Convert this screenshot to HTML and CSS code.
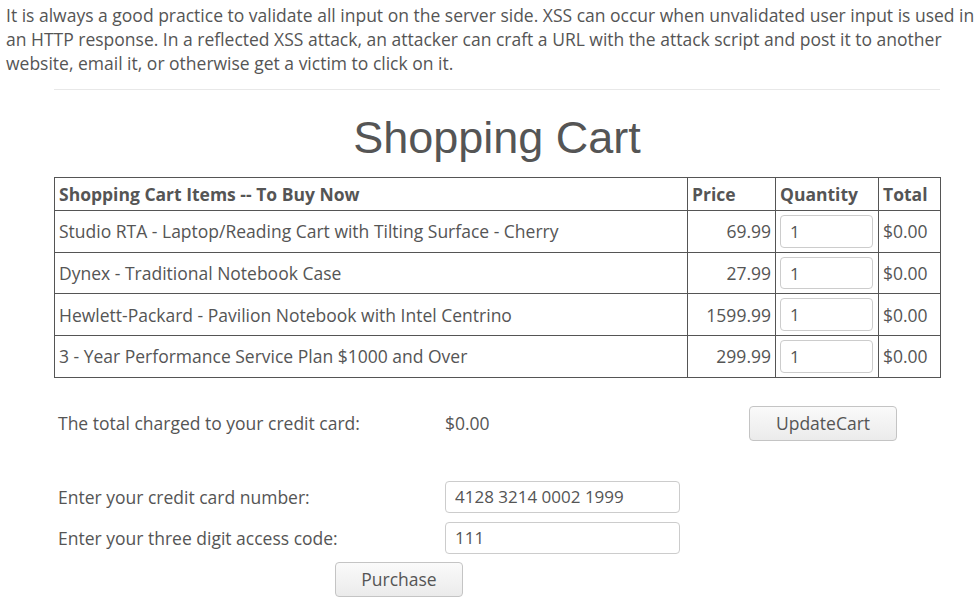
FILE: index.html
```html
<!DOCTYPE html>
<html>
<head>
<meta charset="utf-8">
<link rel="stylesheet" href="styles.css">
</head>
<body>
<p class="intro">It is always a good practice to validate all input on the server side. XSS can occur when unvalidated user input is used in an HTTP response. In a reflected XSS attack, an attacker can craft a URL with the attack script and post it to another website, email it, or otherwise get a victim to click on it.</p>
<div class="lesson">
  <hr class="rule">
  <h1 class="title">Shopping Cart</h1>
  <table class="cart">
    <colgroup>
      <col class="c-item"><col class="c-price"><col class="c-qty"><col class="c-total">
    </colgroup>
    <thead>
      <tr><th>Shopping Cart Items -- To Buy Now</th><th>Price</th><th>Quantity</th><th>Total</th></tr>
    </thead>
    <tbody>
      <tr><td>Studio RTA - Laptop/Reading Cart with Tilting Surface - Cherry</td><td class="num">69.99</td><td><input class="field qty" value="1"></td><td>$0.00</td></tr>
      <tr><td>Dynex - Traditional Notebook Case</td><td class="num">27.99</td><td><input class="field qty" value="1"></td><td>$0.00</td></tr>
      <tr><td>Hewlett-Packard - Pavilion Notebook with Intel Centrino</td><td class="num">1599.99</td><td><input class="field qty" value="1"></td><td>$0.00</td></tr>
      <tr><td>3 - Year Performance Service Plan $1000 and Over</td><td class="num">299.99</td><td><input class="field qty" value="1"></td><td>$0.00</td></tr>
    </tbody>
  </table>
  <div class="checkout">
    <div class="row total-row">
      <span class="label">The total charged to your credit card:</span>
      <span class="value">$0.00</span>
      <button class="btn update">UpdateCart</button>
    </div>
    <div class="row card-row">
      <span class="label">Enter your credit card number:</span>
      <input class="field wide" value="4128 3214 0002 1999">
    </div>
    <div class="row code-row">
      <span class="label">Enter your three digit access code:</span>
      <input class="field wide" value="111">
    </div>
    <div class="row buy-row">
      <button class="btn purchase">Purchase</button>
    </div>
  </div>
</div>
</body>
</html>
```
FILE: styles.css
```css
html, body {
  margin: 0;
  padding: 0;
  background: #fff;
}
body {
  font-family: "Open Sans", "DejaVu Sans", sans-serif;
  font-size: 17.5px;
  line-height: 24px;
  color: #555;
}
.intro {
  margin: 0;
  padding: 3px 0 0 6px;
  width: 972px;
}
.lesson {
  margin: 0 38px 0 54px;
  width: 886px;
}
.rule {
  margin: 14px 0 0 0;
  border: 0;
  border-top: 1px solid #e8e8e8;
  height: 0;
}
.title {
  margin: 22px 0 13px 0;
  font-family: "Liberation Sans", Arial, sans-serif;
  font-weight: normal;
  font-size: 45px;
  line-height: 52px;
  text-align: center;
  color: #555;
}
.cart {
  width: 886px;
  border-collapse: collapse;
  table-layout: fixed;
  border: 1px solid #555;
}
.c-item { width: 633px; }
.c-price { width: 88px; }
.c-qty { width: 103px; }
.c-total { width: 62px; }
.cart th, .cart td {
  border: 1px solid #555;
  padding: 4px;
  text-align: left;
  vertical-align: middle;
  white-space: nowrap;
}
.cart th {
  font-weight: bold;
}
.cart td.num {
  text-align: right;
}
.field {
  box-sizing: border-box;
  font-family: "Open Sans", "DejaVu Sans", sans-serif;
  font-size: 17px;
  color: #555;
  border: 1px solid #ccc;
  border-radius: 4px;
  padding: 0 9px;
  background: #fff;
  display: block;
  margin: 0;
}
.qty {
  width: 93px;
  height: 32.7px;
}
.wide {
  width: 235px;
  height: 32px;
}
.checkout {
  padding: 0 0 0 4px;
}
.row {
  display: grid;
  grid-template-columns: 387px 304px auto;
  align-items: center;
}
.total-row {
  margin-top: 28px;
}
.card-row {
  margin-top: 40px;
}
.code-row {
  margin-top: 9px;
}
.buy-row {
  margin-top: 8px;
  display: flex;
  padding-left: 277px;
}
.btn {
  font-family: "Open Sans", "DejaVu Sans", sans-serif;
  font-size: 17.5px;
  color: #555;
  background: linear-gradient(#fafafa, #ebebeb);
  border: 1px solid #c4c4c4;
  border-radius: 4px;
  padding: 0;
  margin: 0;
}
.update {
  width: 148px;
  height: 35px;
  justify-self: start;
  margin-left: 0;
}
.purchase {
  width: 128px;
  height: 35px;
}
```
